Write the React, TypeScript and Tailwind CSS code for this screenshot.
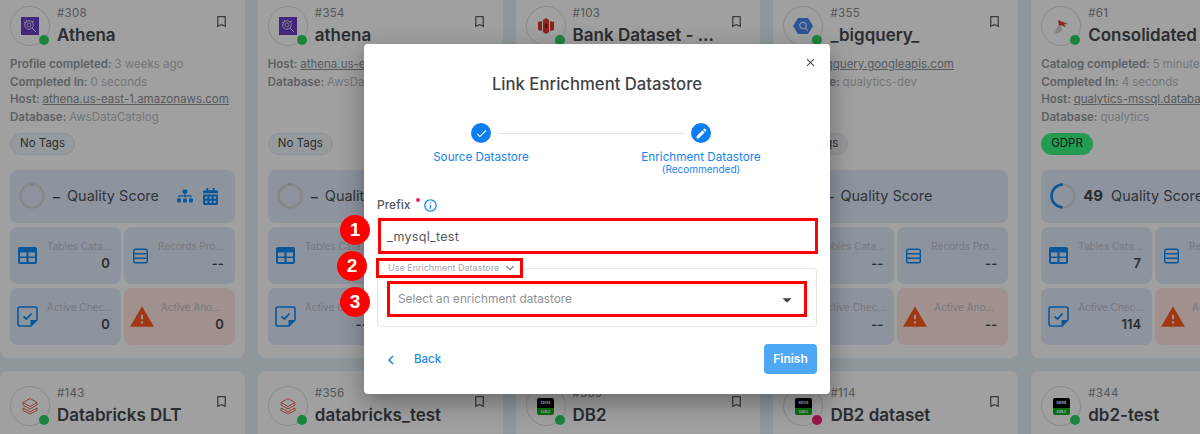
import { FaCalendarAlt, FaSitemap } from "react-icons/fa";
import { MdBookmarkBorder, MdCheck, MdClose, MdEdit, MdExpandMore, MdInfoOutline, MdWarning, MdArrowDropDown, MdChevronLeft } from "react-icons/md";

type CardProps = {
  id: string;
  title: string;
  logo: string;
  dot?: string;
  lines: [string, string, boolean?][];
  tag?: string;
  score?: string;
  progress?: number;
  showIcons?: boolean;
  stats: [string, string, string, string];
};

const AthenaLogo = () => (
  <svg viewBox="0 0 18 18" className="w-[18px] h-[18px]">
    <rect width="18" height="18" fill="#6b3fc4" />
    <circle cx="8" cy="8" r="4.2" fill="none" stroke="#e5dcf7" strokeWidth="0.9" />
    <circle cx="8" cy="8" r="2" fill="none" stroke="#e5dcf7" strokeWidth="0.7" />
    <path d="M11 11l4 4M3 5l2 1M5 3l1 2M13 4l-2 1" stroke="#e5dcf7" strokeWidth="1" />
  </svg>
);

const BankLogo = () => (
  <svg viewBox="0 0 18 18" className="w-[18px] h-[18px]">
    <path d="M1 5l4-1v10l-4-1zM17 5l-4-1v10l4-1zM6 3l3-2 3 2v12l-3 2-3-2z" fill="#d93a2e" />
    <rect x="8" y="7" width="2" height="4" fill="#7a1712" />
  </svg>
);

const BigQueryLogo = () => (
  <svg viewBox="0 0 20 18" className="w-5 h-[18px]">
    <path d="M5 1h10l5 8-5 8H5L0 9z" fill="#4a86f0" />
    <circle cx="10" cy="8.5" r="3.2" fill="none" stroke="#d8e4fb" strokeWidth="1.2" />
    <path d="M12 11l2.5 2.5" stroke="#d8e4fb" strokeWidth="1.2" />
  </svg>
);

const MssqlLogo = () => (
  <svg viewBox="0 0 18 18" className="w-[18px] h-[18px]">
    <path d="M3 16c1-5 3-8 6-8l1 5c-2 3-5 4-7 3z" fill="#d0d0d0" />
    <path d="M6 3l10 4-4 .5 2 3-5-2.5-2 1z" fill="#d8403a" />
  </svg>
);

const DatabricksLogo = () => (
  <svg viewBox="0 0 18 18" className="w-[18px] h-[18px]" fill="none" stroke="#f05a44" strokeWidth="0.9">
    <path d="M9 1.5l7 4-7 4-7-4zM2 8l7 4 7-4M2 11l7 4 7-4" />
    <path d="M2 5.5V8M16 5.5V8M2 11v2.5l7 3.5 7-3.5V11" />
  </svg>
);

const Db2Logo = () => (
  <div className="w-[17px] h-[17px] rounded-[2px] overflow-hidden flex flex-col font-['Liberation_Serif',serif] font-bold text-[5px] leading-none text-center">
    <div className="flex-1 bg-black text-white flex items-center justify-center">IBM</div>
    <div className="h-[7px] bg-[#0fb00f] text-white flex items-center justify-center">DB2</div>
  </div>
);

const logos: Record<string, () => React.ReactElement> = {
  athena: AthenaLogo,
  bank: BankLogo,
  bigquery: BigQueryLogo,
  mssql: MssqlLogo,
  databricks: DatabricksLogo,
  db2: Db2Logo,
};

const TableIcon = () => (
  <svg viewBox="0 0 19 17" className="w-[19px] h-[17px] shrink-0">
    <rect width="19" height="17" rx="2" fill="#0f8bf5" />
    <path d="M2 5.5h6.5v4H2zM10.5 5.5H17v4h-6.5zM2 11h6.5v4H2zM10.5 11H17v4h-6.5z" fill="#dfeafb" />
  </svg>
);

const RecordsIcon = () => (
  <svg viewBox="0 0 16 16" className="w-[15px] h-4 shrink-0" fill="none" stroke="#0f8bf5" strokeWidth="1.5">
    <rect x="0.75" y="0.75" width="14.5" height="14.5" rx="2" />
    <path d="M1 5.6h14M1 10.4h14" />
  </svg>
);

const CheckIcon = () => (
  <svg viewBox="0 0 21 21" className="w-[21px] h-[21px] shrink-0" fill="none">
    <path d="M3 1h15a2 2 0 0 1 2 2v11l-6 6H3a2 2 0 0 1-2-2V3a2 2 0 0 1 2-2z" stroke="#0f8bf5" strokeWidth="1.6" />
    <path d="M13.5 20v-6h6.5z" fill="#0f8bf5" />
    <path d="M6.5 10.5l3 2.5 5-5.5" stroke="#0f8bf5" strokeWidth="1.8" />
  </svg>
);

const Gauge = ({ progress }: { progress?: number }) => (
  <svg viewBox="0 0 26 26" className="w-[26px] h-[26px] shrink-0">
    <circle cx="13" cy="13" r="11.5" fill="none" stroke="#d6d6d6" strokeWidth="2.5" />
    {progress ? (
      <circle
        cx="13"
        cy="13"
        r="11.5"
        fill="none"
        stroke="#0f8bf5"
        strokeWidth="2.5"
        strokeDasharray={`${(progress / 100) * 72.3} 72.3`}
        transform="translate(26 0) scale(-1 1) rotate(-90 13 13)"
      />
    ) : (
      <path d="M13 .5v2" stroke="#7ea7d8" strokeWidth="0.8" />
    )}
  </svg>
);

const StatBox = ({ label, value, icon, pad, danger }: { label: string; value: string; icon: React.ReactNode; pad: string; danger?: boolean }) => (
  <div className={`h-[57px] rounded-lg flex items-center pr-2 ${pad} ${danger ? "bg-[#fee6e2]" : "bg-[#dfeafb]"}`}>
    {icon}
    <div className="flex-1 min-w-0 text-right mb-[2px]">
      <div className="truncate text-[10px] leading-4 text-[#bdc1c6] text-left">{label}</div>
      <div className="mt-[1px] pr-[3px] text-[13px] leading-4 font-semibold text-[#45484d]">{value}</div>
    </div>
  </div>
);

const Card = ({ id, title, logo, dot = "#28d25f", lines, tag, score, progress, showIcons, stats }: CardProps) => {
  const Logo = logos[logo];
  return (
    <div className="bg-[#fdfdfd] rounded-lg pt-[15px] px-[10px] h-[367px]">
      <div className="flex items-start">
        <div className="relative w-10 h-10 rounded-full border border-[#dcdcdc] flex items-center justify-center shrink-0">
          <Logo />
          <span className="absolute right-0 bottom-0 w-[10px] h-[10px] rounded-full" style={{ background: dot }} />
        </div>
        <div className="ml-[7px] flex-1 min-w-0">
          <div className="text-[11.5px] leading-3 mt-[1px] text-[#85898e] tracking-[0.3px]">#{id}</div>
          <div className="text-[17px] leading-6 mt-1 font-semibold text-[#45484d] truncate">{title}</div>
        </div>
        <MdBookmarkBorder className="mt-[8px] mr-[6px] text-[15px] text-[#5a5d62] shrink-0" />
      </div>
      <div className="mt-[9px] h-[70px] text-[11.5px] leading-[17.6px] text-[#b8bcc0]">
        {lines.map(([key, val, link]) => (
          <div key={key} className="truncate">
            <span className="font-semibold text-[#969a9f]">{key}: </span>
            <span className={link ? "underline text-[#8c9096]" : ""}>{val}</span>
          </div>
        ))}
      </div>
      <div className="mt-[7px] h-[22px]">
        {tag === "GDPR" ? (
          <div className="flex w-fit h-[22px] items-center px-[10px] rounded-full bg-[#38f880] text-[11.5px] text-[#1d2a20]">GDPR</div>
        ) : (
          <div className="flex w-fit h-[22px] items-center px-[9px] rounded-full border border-[#dfe6ee] bg-[#f0f4f9] text-[11.5px] text-[#45484d]">{tag}</div>
        )}
      </div>
      <div className="mt-[15px] h-[53px] pb-px rounded-lg bg-[#dfeafb] flex items-center pl-[9px] pr-[16px]">
        <Gauge progress={progress} />
        {score ? (
          <span className="ml-[7px] mr-2 text-[15px] font-bold text-[#45484d]">{score}</span>
        ) : (
          <span className="ml-2 mr-2 w-[6px] text-[14px] font-medium text-[#45484d]">–</span>
        )}
        <span className="text-[14.5px] text-[#50545a] whitespace-nowrap">Quality Score</span>
        {showIcons && (
          <div className="ml-auto flex items-center gap-[9px] text-[#0f8bf5]">
            <FaSitemap className="w-4 h-4" />
            <FaCalendarAlt className="text-[17px]" />
          </div>
        )}
      </div>
      <div className="mt-1 grid grid-cols-2 gap-x-[3px] gap-y-1">
        <StatBox label="Tables Cataloged" value={stats[0]} pad="pl-2 gap-[10px]" icon={<TableIcon />} />
        <StatBox label="Records Profiled" value={stats[1]} pad="pl-[9px] gap-[10px]" icon={<RecordsIcon />} />
        <StatBox label="Active Checks" value={stats[2]} pad="pl-[7px] gap-[9px]" icon={<CheckIcon />} />
        <StatBox label="Active Anomalies" value={stats[3]} pad="pl-[5px] gap-[6px]" danger icon={<MdWarning className="text-[26px] text-[#ff5a1f] shrink-0" />} />
      </div>
    </div>
  );
};

const dashes: [string, string, string, string] = ["--", "--", "--", "--"];

const cards: CardProps[] = [
  {
    id: "308",
    title: "Athena",
    logo: "athena",
    lines: [
      ["Profile completed", "3 weeks ago"],
      ["Completed In", "0 seconds"],
      ["Host", "athena.us-east-1.amazonaws.com", true],
      ["Database", "AwsDataCatalog"],
    ],
    tag: "No Tags",
    showIcons: true,
    stats: ["0", "--", "0", "0"],
  },
  {
    id: "354",
    title: "athena",
    logo: "athena",
    lines: [
      ["Host", "athena.us-east-1.amazonaws.com", true],
      ["Database", "AwsDataCatalog"],
    ],
    tag: "No Tags",
    stats: dashes,
  },
  {
    id: "103",
    title: "Bank Dataset - ...",
    logo: "bank",
    lines: [
      ["Host", "bank.us-east-1.amazonaws.com", true],
      ["Database", "bank"],
    ],
    tag: "No Tags",
    stats: dashes,
  },
  {
    id: "355",
    title: "_bigquery_",
    logo: "bigquery",
    lines: [
      ["Host", "bigquery.googleapis.com", true],
      ["Database", "qualytics-dev"],
    ],
    tag: "No Tags",
    stats: dashes,
  },
  {
    id: "61",
    title: "Consolidated Balance",
    logo: "mssql",
    lines: [
      ["Catalog completed", "5 minutes ago"],
      ["Completed In", "4 seconds"],
      ["Host", "qualytics-mssql.database.windows.net", true],
      ["Database", "qualytics"],
    ],
    tag: "GDPR",
    score: "49",
    progress: 49,
    stats: ["7", "--", "114", "--"],
  },
  { id: "143", title: "Databricks DLT", logo: "databricks", lines: [], tag: "No Tags", stats: dashes },
  { id: "356", title: "databricks_test", logo: "databricks", lines: [], tag: "No Tags", stats: dashes },
  { id: "369", title: "DB2", logo: "db2", lines: [], tag: "No Tags", stats: dashes },
  { id: "114", title: "DB2 dataset", logo: "db2", dot: "#f0246e", lines: [], tag: "No Tags", stats: dashes },
  { id: "344", title: "db2-test", logo: "db2", lines: [], tag: "No Tags", stats: dashes },
];

const Badge = ({ n, className }: { n: number; className: string }) => (
  <div className={`absolute w-[30px] h-[30px] rounded-full bg-[#ff0000] text-white flex items-center justify-center font-['Liberation_Sans',sans-serif] font-bold text-[19px] ${className}`}>
    {n}
  </div>
);

const Modal = () => (
  <div className="relative w-[466px] h-[350px] bg-white rounded shadow-[0_8px_24px_rgba(0,0,0,0.35)] px-[13px] pt-7">
    <MdClose className="absolute right-[13px] top-[12px] text-[13px] text-[#44474c]" />
    <h2 className="text-center text-[16.7px] leading-6 font-medium text-[#3f4246]">Link Enrichment Datastore</h2>

    <div className="ml-[94px] mt-[27px] w-[240px] flex items-center">
      <div className="w-5 h-5 rounded-full bg-[#0a7df0] flex items-center justify-center">
        <MdCheck className="text-white text-[13px]" />
      </div>
      <div className="flex-1 h-px mx-[7px] bg-[#e2e2e2]" />
      <div className="w-5 h-5 rounded-full bg-[#0a7df0] flex items-center justify-center">
        <MdEdit className="text-white text-[13px]" />
      </div>
    </div>
    <div className="-ml-[6px] mt-[6px] w-[440px] grid grid-cols-2 text-center text-[#1785ee]">
      <div className="text-[11.7px] leading-4">Source Datastore</div>
      <div>
        <div className="text-[11.7px] leading-4">Enrichment Datastore</div>
        <div className="-mt-px text-[10px] leading-[10px]">(Recommended)</div>
      </div>
    </div>

    <div className="mt-[23px] h-4 flex items-center text-[12px] font-medium text-[#55585c]">
      Prefix
      <span className="ml-[6px] -mt-[10px] w-1 h-1 rounded-full bg-[#e8246a]" />
      <MdInfoOutline className="ml-[3px] text-[15px] text-[#1785ee]" />
    </div>
    <div className="ml-px mt-[5px] h-9 w-[440px] border-[3px] border-[#ff0000] flex items-center pl-[6px] pt-[2px] text-[12.5px] text-[#55585c] tracking-[0.3px]">_mysql_test</div>

    <div className="relative mt-[14px] h-[59px] border border-[#e4e4e4] rounded pt-3 px-[9px]">
      <div className="absolute -left-[2px] -top-[11px] w-[147px] h-5 border-[3px] border-[#ff0000] bg-white flex items-center pl-[9px] text-[9px] whitespace-nowrap text-[#a5a8ac]">
        Use Enrichment Datastore
        <MdExpandMore className="ml-[3px] text-[16px] text-[#85888c]" />
      </div>
      <div className="h-9 border-[3px] border-[#ff0000] flex items-center justify-between pl-2 pr-[6px] pt-px text-[11.8px] text-[#8e9195]">
        Select an enrichment datastore
        <MdArrowDropDown className="text-[22px] text-[#44474c]" />
      </div>
    </div>

    <div className="mt-[17px] h-[30px] flex items-center justify-between">
      <div className="flex items-center pl-[6px] pt-px text-[11.5px] font-medium text-[#1785ee]">
        <MdChevronLeft className="text-[18px] -ml-[1px]" />
        <span className="ml-[14px]">Back</span>
      </div>
      <div className="w-[53px] h-[30px] rounded bg-[#4fa8f6] text-white text-[12px] font-semibold flex items-center justify-center">Finish</div>
    </div>

    <Badge n={1} className="-left-6 top-[171px]" />
    <Badge n={2} className="-left-[27px] top-[207px]" />
    <Badge n={3} className="-left-6 top-[243px]" />
  </div>
);

export default function App() {
  return (
    <div className="relative w-[1200px] h-[434px] overflow-hidden bg-[#e3eff5] font-['Inter','Noto_Sans',sans-serif]">
      <div className="w-[1276px] -mt-[9px] grid grid-cols-5 gap-x-[13px] gap-y-[13px]">
        {cards.map((card) => (
          <Card key={card.id} {...card} />
        ))}
      </div>
      <div className="absolute inset-0 bg-black/[0.37] pl-[364px] pt-[44px]">
        <Modal />
      </div>
    </div>
  );
}
